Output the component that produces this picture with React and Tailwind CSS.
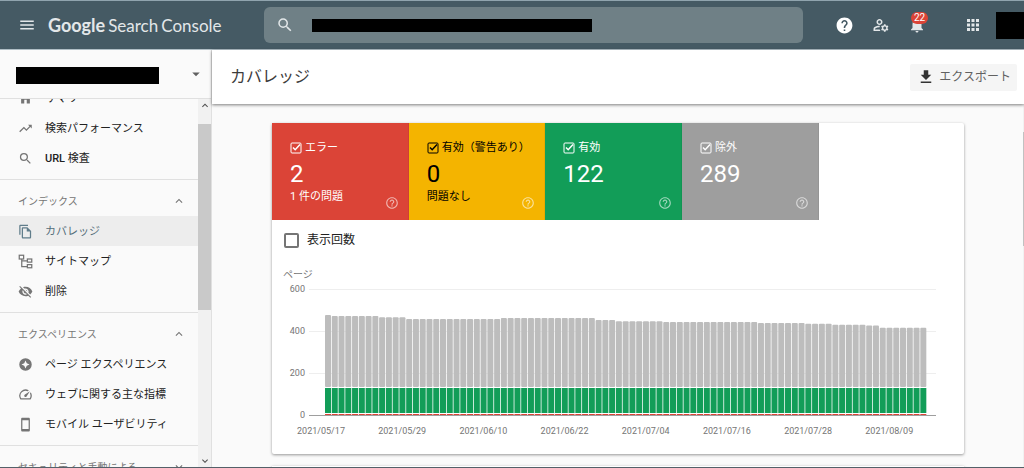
import React, { useState } from 'react';
import {
  MdMenu,
  MdSearch,
  MdHelp,
  MdOutlineManageAccounts,
  MdNotifications,
  MdApps,
  MdArrowDropDown,
  MdTrendingUp,
  MdOutlineFileCopy,
  MdVisibilityOff,
  MdOutlineSpeed,
  MdOutlineStayCurrentPortrait,
  MdExpandLess,
  MdExpandMore,
  MdHome,
  MdFileDownload,
  MdHelpOutline,
} from 'react-icons/md';

// Sitemap tree icon
function SitemapIcon({ className }) {
  return (
    <svg viewBox="0 0 24 24" className={className} fill="none" stroke="currentColor" strokeWidth="2">
      <rect x="2" y="2" width="7" height="6" />
      <rect x="15" y="8" width="7" height="5" />
      <rect x="15" y="17" width="7" height="5" />
      <path d="M6 8v12h9M6 11h9" />
    </svg>
  );
}

// Filled circle with a four-pointed star cut out
function ExperienceIcon({ className }) {
  return (
    <svg viewBox="0 0 24 24" className={className} fill="currentColor">
      <path
        fillRule="evenodd"
        d="M12 2a10 10 0 1 0 0 20a10 10 0 1 0 0-20zM12 5.500l2 4.500 4.500 2-4.500 2-2 4.500-2-4.500-4.500-2 4.500-2z"
      />
    </svg>
  );
}

const sections = [
  {
    title: 'インデックス',
    items: [
      { label: 'カバレッジ', icon: MdOutlineFileCopy, active: true },
      { label: 'サイトマップ', icon: SitemapIcon },
      { label: '削除', icon: MdVisibilityOff },
    ],
  },
  {
    title: 'エクスペリエンス',
    items: [
      { label: 'ページ エクスペリエンス', icon: ExperienceIcon },
      { label: 'ウェブに関する主な指標', icon: MdOutlineSpeed },
      { label: 'モバイル ユーザビリティ', icon: MdOutlineStayCurrentPortrait },
    ],
  },
];

const cards = [
  { id: 'error', label: 'エラー', value: 2, note: '1 件の問題', style: 'bg-[#db4437] text-white' },
  { id: 'warning', label: '有効（警告あり）', value: 0, note: '問題なし', style: 'bg-[#f4b400] text-black' },
  { id: 'valid', label: '有効', value: 122, note: '', style: 'bg-[#129d58] text-white' },
  { id: 'excluded', label: '除外', value: 289, note: '', style: 'bg-[#9e9e9e] text-white' },
];

// [number of days, total pages]
const runs = [
  [1, 476], [7, 471], [4, 465], [14, 457], [14, 462], [3, 452], [7, 447],
  [14, 443], [7, 438], [4, 434], [5, 430], [2, 426], [7, 415],
];
const totals = runs.flatMap(([days, total]) => Array(days).fill(total));

const dates = [
  '2021/05/17', '2021/05/29', '2021/06/10', '2021/06/22',
  '2021/07/04', '2021/07/16', '2021/07/28', '2021/08/09',
];

function CoverageChart() {
  const base = 132;
  const y = (v) => base - v * 0.21;
  const step = 6.765;

  return (
    <svg viewBox="0 0 692 171" className="block w-full" role="img" aria-label="ページ">
      <g fontSize="9" fill="#757575">
        {[0, 200, 400, 600].map((tick) => (
          <g key={tick}>
            <rect x="37" y={Math.round(y(tick))} width="627" height="1" fill={tick === 0 ? '#9e9e9e' : '#eeeeee'} />
            <text x="33" y={y(tick) + 3} textAnchor="end">{tick}</text>
          </g>
        ))}
        {dates.map((date, i) => (
          <text key={date} x={49 + i * step * 12} y="151" textAnchor="middle">{date}</text>
        ))}
      </g>
      {totals.map((total, i) => {
        const x = 53 + i * step;
        return (
          <g key={i}>
            <rect x={x} y={y(total)} width="6" height={104 - y(total)} rx="1" fill="#bdbdbd" />
            <rect x={x} y="105" width="6" height="25" fill="#129d58" />
            <rect x={x} y="131" width="6" height="1" fill="#db4437" />
          </g>
        );
      })}
    </svg>
  );
}

function SummaryCard({ card, checked, onToggle }) {
  return (
    <div className={`relative h-[97px] flex-1 border-r border-black/5 pl-[18px] pt-[18px] ${card.style}`}>
      <label className="flex items-center gap-[3px] text-[11px] leading-[14px]">
        <input type="checkbox" checked={checked} onChange={onToggle} className="peer sr-only" />
        <svg viewBox="0 0 12 12" className="size-3" fill="none" stroke="currentColor">
          <rect x="1" y="1" width="10" height="10" rx="1" strokeWidth="1" />
          {checked && <path d="M3 5.500l2.200 2.200L10 2.500" strokeWidth="1.500" />}
        </svg>
        {card.label}
      </label>
      <p className="mt-[3px] text-2xl leading-8">{card.value}</p>
      <p className="text-[11px] leading-[14px]">{card.note}</p>
      <button type="button" aria-label="ヘルプ" className="absolute bottom-2.5 right-[9px] text-white/60">
        <MdHelpOutline className="size-[14px]" />
      </button>
    </div>
  );
}

function Header() {
  return (
    <header className="flex h-[50px] shrink-0 items-center border-y border-t-[#90a4ae] border-b-[#b0bec5] bg-[#455a64] text-[#e3e7e9]">
      <div className="flex w-[264px] shrink-0 items-center pl-[18px]">
        <button type="button" aria-label="メニュー"><MdMenu className="size-[18px]" /></button>
        <a href="#" className="ml-3 flex items-baseline gap-[3px] whitespace-nowrap font-[Lato] text-[17px] leading-6">
          <span className="text-[18px] font-bold">Google</span>
          <span>Search</span>
          <span>Console</span>
        </a>
      </div>
      <label className="flex h-9 max-w-[539px] flex-1 items-center rounded-md bg-[#6f8086] pl-3">
        <MdSearch className="size-[18px] shrink-0" />
        <input type="search" aria-label="検索" className="ml-[18px] h-[13px] w-[280px] bg-black outline-none" />
      </label>
      <div className="ml-auto flex items-center">
        <button type="button" aria-label="ヘルプ"><MdHelp className="size-[19px] text-white" /></button>
        <button type="button" aria-label="ユーザー設定" className="ml-[18px]"><MdOutlineManageAccounts className="size-[18px]" /></button>
        <button type="button" aria-label="通知" className="relative ml-[18px]">
          <MdNotifications className="size-[18px]" />
          <span className="absolute -top-1 left-[3px] rounded-full bg-[#db4437] px-[3px] text-[10px] leading-3 text-white">22</span>
        </button>
        <button type="button" aria-label="アプリ" className="ml-[38px]"><MdApps className="size-[18px]" /></button>
        <div className="ml-3.5 h-[27px] w-7 bg-black"></div>
      </div>
    </header>
  );
}

function NavItem({ item }) {
  const Icon = item.icon;
  return (
    <a
      href="#"
      className={`flex h-[30px] shrink-0 items-center gap-3 pl-[18px] text-[11px] ${
        item.active ? 'bg-[#ededed] text-[#546e7a]' : 'text-[#212121]'
      }`}
    >
      <Icon className={`size-[15px] ${item.active ? 'text-[#607d8b]' : 'text-[#757575]'}`} />
      <span className="pt-[3px]">{item.label}</span>
    </a>
  );
}

function Sidebar() {
  return (
    <aside className="flex w-[212px] shrink-0 flex-col border-r border-[#e0e0e0] bg-[#fafafa]">
      <div className="flex h-[49px] shrink-0 items-center justify-between border-b border-[#e0e0e0] pl-4 pr-1.5">
        <div className="mt-0.5 h-[17px] w-[143px] bg-black"></div>
        <button type="button" aria-label="プロパティを選択" className="text-[#616161]"><MdArrowDropDown className="size-[18px]" /></button>
      </div>
      <div className="flex min-h-0 flex-1">
        <nav className="flex flex-1 flex-col overflow-hidden">
          <div className="-mt-4 shrink-0 border-b border-[#e0e0e0] pb-1.5">
            <NavItem item={{ label: 'サマリー', icon: MdHome }} />
            <NavItem item={{ label: '検索パフォーマンス', icon: MdTrendingUp }} />
            <NavItem item={{ label: <><b className="font-medium">URL</b> 検査</>, icon: MdSearch }} />
          </div>
          {sections.map((section) => (
            <div key={section.title} className="shrink-0 border-b border-[#e0e0e0] pb-1.5">
              <h2 className="flex h-9 items-center justify-between pl-[18px] pr-3 pt-1.5 text-[10px] text-[#757575]">
                {section.title}
                <MdExpandLess className="size-[14px]" />
              </h2>
              {section.items.map((item) => (
                <NavItem key={item.label} item={item} />
              ))}
            </div>
          ))}
          <h2 className="flex h-[42px] shrink-0 items-center justify-between pl-[18px] pr-3 text-[10px] text-[#757575]">
            セキュリティと手動による
            <MdExpandMore className="size-[14px]" />
          </h2>
        </nav>
        <div className="flex w-[13px] shrink-0 flex-col items-center bg-[#f1f1f1] text-[#505050]">
          <MdExpandLess className="h-[25px] w-3 pb-3" />
          <div className="h-[186px] w-full bg-[#c9c9c9]"></div>
          <MdExpandMore className="mt-auto size-3" />
        </div>
      </div>
    </aside>
  );
}

function App() {
  const [checked, setChecked] = useState({ error: true, warning: true, valid: true, excluded: true });

  const toggle = (id) => {
    setChecked((prev) => ({ ...prev, [id]: !prev[id] }));
  };

  return (
    <div className="flex h-screen flex-col overflow-hidden border-b border-[#546068] bg-[#fafafa] font-[Roboto,'Noto_Sans_CJK_JP',sans-serif]">
      <Header />
      <div className="flex min-h-0 flex-1">
        <Sidebar />
        <main className="flex min-w-0 flex-1 flex-col">
          <div className="relative flex h-[54px] shrink-0 items-center justify-between bg-white pl-[18px] pr-[7px] shadow-[0_1px_3px_rgba(0,0,0,0.5)]">
            <h1 className="text-base text-[#3c3c3c]">カバレッジ</h1>
            <button type="button" className="flex h-[27px] items-center gap-1 rounded-xs bg-[#f5f5f5] pl-[7px] pr-1.5 text-xs text-[#616161]">
              <MdFileDownload className="size-[18px] text-[#333]" />
              エクスポート
            </button>
          </div>
          <div className="flex min-h-0 flex-1">
            <div className="min-w-0 flex-1 overflow-hidden pl-[60px] pr-[59px] pt-[19px]">
              <section className="rounded-xs bg-white shadow-[0_1px_3px_rgba(0,0,0,0.4)]">
                <div className="flex w-[79%]">
                  {cards.map((card) => (
                    <SummaryCard key={card.id} card={card} checked={checked[card.id]} onToggle={() => toggle(card.id)} />
                  ))}
                </div>
                <label className="flex h-10 items-center gap-2 pl-3 text-xs text-[#212121]">
                  <input type="checkbox" className="size-[15px] appearance-none rounded-xs border-2 border-[#757575] checked:bg-[#757575]" />
                  表示回数
                </label>
                <p className="pl-[11px] pt-[7px] text-[10px] leading-4 text-[#757575]">ページ</p>
                <CoverageChart />
              </section>
              <section className="mt-3 h-10 bg-white shadow-[0_1px_3px_rgba(0,0,0,0.4)]"></section>
            </div>
            <div className="w-px bg-[#f1f1f1] pt-7">
              <div className="h-[114px] bg-[#c1c1c1]"></div>
            </div>
          </div>
        </main>
      </div>
    </div>
  );
}

export default App;
